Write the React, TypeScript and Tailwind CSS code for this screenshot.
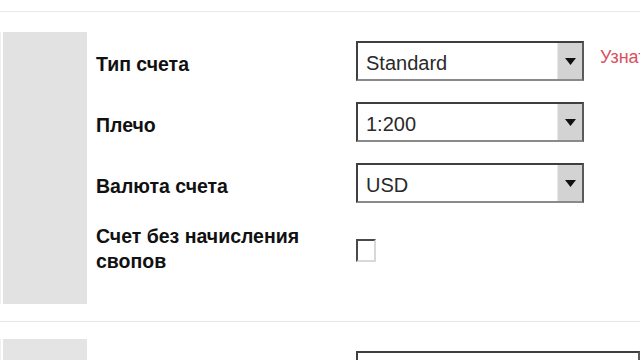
import React from "react";

// TYPES
type SelectProps = {
  value: string;
  wide?: boolean;
};

const Select = ({ value, wide }: SelectProps) => {
  return (
    <div
      className={
        "flex h-[40px] shrink-0 border-2 border-t-[#3f3f3f] border-l-[#3f3f3f] border-r-[#5a5a5a] border-b-[#8a8a8a] bg-white " +
        (wide ? "w-[284px]" : "w-[228px]")
      }
    >
      <div className="flex flex-1 items-center pl-[8px] pt-[3px] text-[20px] text-[#2a2a2a]">
        {value}
      </div>
      {!wide && (
        <div className="flex w-[25px] items-center justify-center border-l border-l-[#e8e8e8] bg-[#d3d3d3]">
          <svg width="11" height="7" viewBox="0 0 11 7">
            <path d="M0 0 L11 0 L5.5 7 Z" fill="#111" />
          </svg>
        </div>
      )}
    </div>
  );
};

const Label = ({ children }: { children: React.ReactNode }) => (
  <div className="w-[260px] shrink-0 text-[19.5px] font-bold leading-[25px] text-[#111]">
    {children}
  </div>
);

const App = () => {
  return (
    <div
      className="relative h-[360px] w-[640px] overflow-hidden bg-white"
      style={{ fontFamily: '"Liberation Sans", Arial, sans-serif' }}
    >
      {/* TOP RULE */}
      <div className="h-[12px] border-b border-b-[#e9e9e9]" />

      {/* ACCOUNT SETTINGS */}
      <section className="mt-[20px] flex h-[272px] border-l border-l-[#f0f0f0] pl-[2px]">
        <div className="w-[84px] shrink-0 bg-[#e2e2e2]" />
        <div className="flex flex-1 flex-col gap-[21px] pl-[9px] pt-[9px]">
          {/* ACCOUNT TYPE */}
          <div className="flex items-center">
            <div className="mt-[6px]">
              <Label>Тип счета</Label>
            </div>
            <Select value="Standard" />
            <span className="ml-[16px] mb-[8px] whitespace-nowrap text-[18px] text-[#d8505e]">
              Узнать больше
            </span>
          </div>

          {/* LEVERAGE */}
          <div className="flex items-center">
            <div className="mt-[6px]">
              <Label>Плечо</Label>
            </div>
            <Select value="1:200" />
          </div>

          {/* CURRENCY */}
          <div className="flex items-center">
            <div className="mt-[6px]">
              <Label>Валюта счета</Label>
            </div>
            <Select value="USD" />
          </div>

          {/* SWAP FREE */}
          <div className="flex items-center">
            <Label>
              Счет без начисления
              <br />
              свопов
            </Label>
            <div className="mt-[2px] h-[23px] w-[20px] border-2 border-t-[#4a4a4a] border-l-[#4a4a4a] border-r-[#d8d8d8] border-b-[#d8d8d8] bg-white" />
          </div>
        </div>
      </section>

      {/* DIVIDER */}
      <div className="mt-[17px] border-t border-t-[#e6e6e6]" />

      {/* NEXT SECTION */}
      <section className="mt-[17px] flex h-[40px] border-l border-l-[#f0f0f0] pl-[2px]">
        <div className="w-[84px] shrink-0 bg-[#e4e4e4]" />
        <div className="flex flex-1 pl-[9px] pt-[12px]">
          <div className="w-[260px] shrink-0" />
          <Select value="" wide />
        </div>
      </section>
    </div>
  );
};

export default App;
